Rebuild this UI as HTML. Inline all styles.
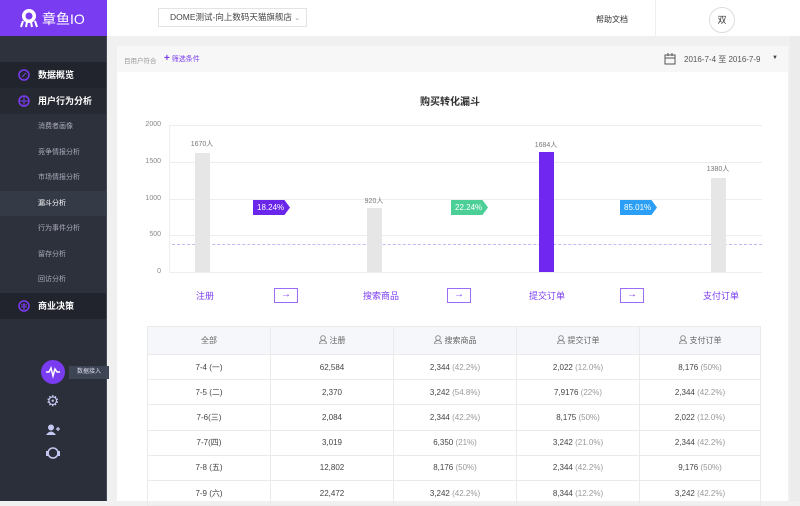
<!DOCTYPE html>
<html><head><meta charset="utf-8"><style>
*{margin:0;padding:0;box-sizing:border-box}
body{width:800px;height:501px;overflow:hidden;background:#f0f0f0;font-family:"Liberation Sans","Noto Sans CJK SC",sans-serif;position:relative}
.abs{position:absolute}
.side{left:0;top:0;width:107px;height:501px;background:#2b2f3a}
.logo{left:0;top:0;width:107px;height:36px;background:#7a3cf0;color:#fff}
.mi{left:0;width:107px;height:26px;color:#fff;font-size:9px;font-weight:bold;line-height:26px;padding-left:38px;background:#21242c}
.si{left:0;width:107px;height:25.5px;color:#aab;font-size:7px;line-height:25.5px;padding-left:38px}
.top{left:107px;top:0;width:693px;height:36px;background:#fff}
.card{left:117px;top:46px;width:671px;height:455px;background:#fff}
.grid{left:170px;width:592px;height:1px;background:#eee}
.ylab{width:20px;text-align:right;font-size:7px;color:#888;left:141px}
.bar{width:15px;background:#e6e6e6}
.val{font-size:7px;color:#777;width:60px;text-align:center}
.tag{height:15px;color:#fff;font-size:8px;line-height:15px;padding-left:4px;clip-path:polygon(0 0,85% 0,100% 50%,85% 100%,0 100%)}
.stage{font-size:9px;color:#7a3cf0;width:80px;text-align:center;top:289px}
.arr{width:24px;height:15px;border:1px solid #9b6cf5;color:#7a3cf0;font-size:10px;text-align:center;line-height:12px;top:288px}
table{border-collapse:collapse;position:absolute;left:147px;top:326px;width:614px;font-size:8px;color:#444}
td,th{border:1px solid #eaeaea;text-align:center;height:25.2px;font-weight:normal}
th{background:#f6f7fb;height:28px;color:#666}
td span{color:#999}
th svg{vertical-align:-1px;margin-right:3px}
</style></head><body>
<div class="abs side"></div>
<div class="abs logo">
<svg class="abs" style="left:19px;top:8px" width="20" height="20" viewBox="0 0 20 20"><circle cx="10" cy="8" r="7" fill="#fff"/><circle cx="10" cy="8" r="3.5" fill="#7a3cf0"/><path d="M4 13 L2 19 M8 14 L7 19 M12 14 L13 19 M16 13 L18 19" stroke="#fff" stroke-width="2"/></svg>
<div class="abs" style="left:42px;top:9px;font-size:14px;color:#fff">章鱼IO</div></div>
<div class="abs" style="left:0;top:36px;width:107px;height:26px;background:#2e323d"></div>
<div class="abs mi" style="top:62px">数据概览</div>
<div class="abs mi" style="top:88px;background:#262931">用户行为分析</div>
<svg class="abs" style="left:18px;top:69px" width="12" height="12"><circle cx="6" cy="6" r="5" fill="none" stroke="#7a3cf0" stroke-width="1.5"/><path d="M4 8 L8 4" stroke="#7a3cf0"/></svg>
<svg class="abs" style="left:18px;top:95px" width="12" height="12"><circle cx="6" cy="6" r="5" fill="none" stroke="#7a3cf0" stroke-width="1.5"/><path d="M1 6H11M6 1V11" stroke="#7a3cf0"/></svg>
<div class="abs" style="left:0;top:114px;width:107px;height:179px;background:#2d313c"></div>
<div class="abs si" style="top:114px">消费者画像</div>
<div class="abs si" style="top:139.5px">竞争情报分析</div>
<div class="abs si" style="top:165px">市场情报分析</div>
<div class="abs si" style="top:190.5px;background:#353a47;color:#fff">漏斗分析</div>
<div class="abs si" style="top:216px">行为事件分析</div>
<div class="abs si" style="top:241.5px">留存分析</div>
<div class="abs si" style="top:267px">回访分析</div>
<div class="abs mi" style="top:293px">商业决策</div>
<svg class="abs" style="left:18px;top:300px" width="12" height="12"><circle cx="6" cy="6" r="5" fill="none" stroke="#7a3cf0" stroke-width="1.5"/><path d="M3 5H9M3 7H9M6 3V10" stroke="#7a3cf0"/></svg>
<div class="abs" style="left:41px;top:360px;width:24px;height:24px;border-radius:50%;background:#7a3cf0"></div>
<svg class="abs" style="left:41px;top:360px" width="24" height="24"><path d="M5 12H8L10 8L12 16L14 9L16 12H19" fill="none" stroke="#fff" stroke-width="1.5"/></svg>
<div class="abs" style="left:69px;top:366px;width:40px;height:13px;background:#3d4454;color:#dde;font-size:6px;line-height:13px;text-align:center">数据接入</div>
<div class="abs" style="left:46px;top:394px;font-size:15px;color:#c5c8f0;line-height:15px">⚙</div>
<svg class="abs" style="left:46px;top:424px" width="14" height="12"><circle cx="5" cy="3.5" r="3" fill="#c5c8f0"/><path d="M0 11Q5 4 10 11Z" fill="#c5c8f0"/><path d="M10 5H14M12 3V7" stroke="#c5c8f0" stroke-width="1.3"/></svg>
<svg class="abs" style="left:45px;top:446px" width="16" height="14"><circle cx="8" cy="7" r="5" fill="none" stroke="#c5c8f0" stroke-width="1.5"/><rect x="1" y="5" width="3" height="5" fill="#c5c8f0"/><rect x="12" y="5" width="3" height="5" fill="#c5c8f0"/></svg>
<div class="abs" style="left:106px;top:36px;width:1px;height:465px;background:#444a57"></div>

<div class="abs top"></div>
<div class="abs" style="left:158px;top:8px;width:149px;height:19px;border:1px solid #e3e3e3;background:#fff;font-size:8.5px;color:#444;line-height:17px;padding-left:11px;white-space:nowrap">DOME测试-向上数码天猫旗舰店 <span style="color:#999;font-size:7px">⌄</span></div>
<div class="abs" style="left:596px;top:14px;font-size:8px;color:#333">帮助文档</div>
<div class="abs" style="left:655px;top:0;width:1px;height:36px;background:#eee"></div>
<div class="abs" style="left:709px;top:7px;width:26px;height:26px;border:1px solid #ddd;border-radius:50%;font-size:9px;text-align:center;line-height:24px;color:#333">双</div>

<div class="abs card"></div>
<div class="abs" style="left:117px;top:46px;width:671px;height:26px;background:#f7f7f7"></div>
<div class="abs" style="left:124px;top:55px;font-size:6.5px;color:#999">目用户符合</div>
<div class="abs" style="left:164px;top:53px;font-size:7px;color:#7a3cf0"><b style="font-size:10px">+</b> 筛选条件</div>
<svg class="abs" style="left:664px;top:53px" width="12" height="12"><rect x="1" y="2" width="10" height="9" fill="none" stroke="#555"/><path d="M1 5H11M4 0V3M8 0V3" stroke="#555"/></svg>
<div class="abs" style="left:684px;top:54px;font-size:8px;color:#555">2016-7-4 至 2016-7-9</div>
<div class="abs" style="left:772px;top:55px;font-size:6px;color:#444">▼</div>
<div class="abs" style="left:790px;top:36px;width:10px;height:465px;background:#ececec"></div>

<div class="abs" style="left:420px;top:93px;font-size:10px;color:#333;font-weight:bold">购买转化漏斗</div>
<div class="abs" style="left:169px;top:125px;width:1px;height:148px;background:#eee"></div>
<div class="abs grid" style="top:125px"></div><div class="abs grid" style="top:162px"></div><div class="abs grid" style="top:199px"></div><div class="abs grid" style="top:235px"></div><div class="abs grid" style="top:272px"></div>
<div class="abs ylab" style="top:121px">2000</div><div class="abs ylab" style="top:158px">1500</div><div class="abs ylab" style="top:195px">1000</div><div class="abs ylab" style="top:231px">500</div><div class="abs ylab" style="top:268px">0</div>
<div class="abs" style="left:172px;top:244px;width:590px;border-top:1px dashed #c7b8f5"></div>
<div class="abs bar" style="left:195px;top:153px;height:119px"></div>
<div class="abs bar" style="left:367px;top:208px;height:64px"></div>
<div class="abs bar" style="left:539px;top:152px;height:120px;background:#7028f0"></div>
<div class="abs bar" style="left:711px;top:178px;height:94px"></div>
<div class="abs val" style="left:172px;top:139px">1670人</div>
<div class="abs val" style="left:344px;top:196px">920人</div>
<div class="abs val" style="left:516px;top:140px">1684人</div>
<div class="abs val" style="left:688px;top:164px">1380人</div>
<div class="abs tag" style="left:253px;top:200px;width:37px;background:#6b26ec">18.24%</div>
<div class="abs tag" style="left:451px;top:200px;width:37px;background:#4ccf97">22.24%</div>
<div class="abs tag" style="left:620px;top:200px;width:37px;background:#2a9ff5">85.01%</div>
<div class="abs stage" style="left:165px">注册</div>
<div class="abs stage" style="left:341px">搜索商品</div>
<div class="abs stage" style="left:507px">提交订单</div>
<div class="abs stage" style="left:681px">支付订单</div>
<div class="abs arr" style="left:274px">→</div>
<div class="abs arr" style="left:447px">→</div>
<div class="abs arr" style="left:620px">→</div>

<table>
<tr><th style="width:123px">全部</th>
<th style="width:123px"><svg width="8" height="9"><circle cx="4" cy="3" r="2.3" fill="none" stroke="#888" stroke-width=".9"/><path d="M0.5 9Q0.5 5.5 4 5.5Q7.5 5.5 7.5 9Z" fill="none" stroke="#888" stroke-width=".9"/></svg>注册</th>
<th style="width:123px"><svg width="8" height="9"><circle cx="4" cy="3" r="2.3" fill="none" stroke="#888" stroke-width=".9"/><path d="M0.5 9Q0.5 5.5 4 5.5Q7.5 5.5 7.5 9Z" fill="none" stroke="#888" stroke-width=".9"/></svg>搜索商品</th>
<th style="width:123px"><svg width="8" height="9"><circle cx="4" cy="3" r="2.3" fill="none" stroke="#888" stroke-width=".9"/><path d="M0.5 9Q0.5 5.5 4 5.5Q7.5 5.5 7.5 9Z" fill="none" stroke="#888" stroke-width=".9"/></svg>提交订单</th>
<th><svg width="8" height="9"><circle cx="4" cy="3" r="2.3" fill="none" stroke="#888" stroke-width=".9"/><path d="M0.5 9Q0.5 5.5 4 5.5Q7.5 5.5 7.5 9Z" fill="none" stroke="#888" stroke-width=".9"/></svg>支付订单</th></tr>
<tr><td>7-4 (一)</td><td>62,584</td><td>2,344 <span>(42.2%)</span></td><td>2,022 <span>(12.0%)</span></td><td>8,176 <span>(50%)</span></td></tr>
<tr><td>7-5 (二)</td><td>2,370</td><td>3,242 <span>(54.8%)</span></td><td>7,9176 <span>(22%)</span></td><td>2,344 <span>(42.2%)</span></td></tr>
<tr><td>7-6(三)</td><td>2,084</td><td>2,344 <span>(42.2%)</span></td><td>8,175 <span>(50%)</span></td><td>2,022 <span>(12.0%)</span></td></tr>
<tr><td>7-7(四)</td><td>3,019</td><td>6,350 <span>(21%)</span></td><td>3,242 <span>(21.0%)</span></td><td>2,344 <span>(42.2%)</span></td></tr>
<tr><td>7-8 (五)</td><td>12,802</td><td>8,176 <span>(50%)</span></td><td>2,344 <span>(42.2%)</span></td><td>9,176 <span>(50%)</span></td></tr>
<tr><td>7-9 (六)</td><td>22,472</td><td>3,242 <span>(42.2%)</span></td><td>8,344 <span>(12.2%)</span></td><td>3,242 <span>(42.2%)</span></td></tr>
</table>
</body></html>
